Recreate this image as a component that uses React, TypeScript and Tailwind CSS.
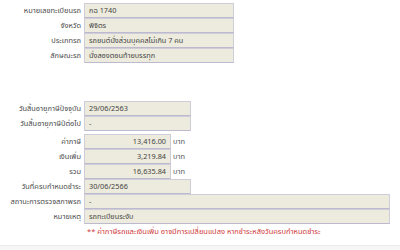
import React from "react";

const font = { fontFamily: "Tahoma, 'Noto Sans Thai', 'Loma', 'Garuda', 'Noto Sans', sans-serif" };

function Row({ label, value, w, right, unit, mt }: { label: string; value: string; w: string; right?: boolean; unit?: string; mt?: string }) {
  return (
    <div className={`flex items-center h-[15px] ${mt ?? ""}`}>
      <div className="w-[81px] text-right text-[7.4px] leading-[15px] text-[#4a4a4a] whitespace-nowrap">{label}</div>
      <div
        className={`ml-[3px] h-[15px] ${w} bg-[#ecebdd] border border-[#cfcdd9] border-b-[#bdbad0] text-[7.3px] leading-[13px] text-[#444] px-[4px] whitespace-nowrap overflow-hidden ${right ? "text-right" : ""}`}
      >
        {value}
      </div>
      {unit && <div className="ml-[2px] text-[7.4px] text-[#555]">{unit}</div>}
    </div>
  );
}

export default function App() {
  return (
    <div className="w-[400px] h-[250px] bg-white relative overflow-hidden" style={font}>
      <div className="flex flex-col pt-[3px]">
        <Row label="หมายเลขทะเบียนรถ" value="กฉ 1740" w="w-[150px]" />
        <Row label="จังหวัด" value="พิจิตร" w="w-[150px]" />
        <Row label="ประเภทรถ" value="รถยนต์นั่งส่วนบุคคลไม่เกิน 7 คน" w="w-[150px]" />
        <Row label="ลักษณะรถ" value="นั่งสองตอนท้ายบรรทุก" w="w-[150px]" />
        <Row label="วันสิ้นอายุภาษีปัจจุบัน" value="29/06/2563" w="w-[107px]" mt="mt-[38px]" />
        <Row label="วันสิ้นอายุภาษีปีต่อไป" value="-" w="w-[107px]" />
        <Row label="ค่าภาษี" value="13,416.00" w="w-[87px]" right unit="บาท" mt="mt-[3px]" />
        <Row label="เงินเพิ่ม" value="3,219.84" w="w-[87px]" right unit="บาท" />
        <Row label="รวม" value="16,635.84" w="w-[87px]" right unit="บาท" />
        <Row label="วันที่ครบกำหนดชำระ" value="30/06/2566" w="w-[107px]" />
        <Row label="สถานะการตรวจสภาพรถ" value="-" w="w-[306px]" />
        <Row label="หมายเหตุ" value="รถทะเบียนระงับ" w="w-[306px]" />
        <div className="pl-[87px] mt-[2px] text-[7.5px] leading-[12px] text-[#cf3a3a] whitespace-nowrap">
          ** ค่าภาษีรถและเงินเพิ่ม อาจมีการเปลี่ยนแปลง หากชำระหลังวันครบกำหนดชำระ
        </div>
      </div>
      <div className="absolute left-0 right-0 bottom-0 h-[5px] bg-[#f6f6f6] border-t border-[#ececec]" />
    </div>
  );
}
